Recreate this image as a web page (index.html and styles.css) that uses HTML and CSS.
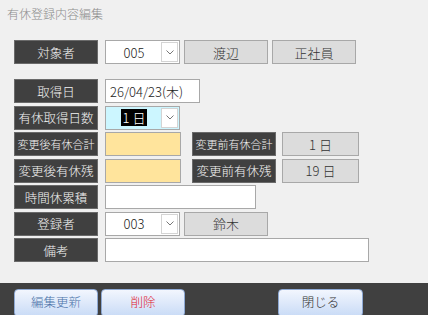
FILE: index.html
```html
<!DOCTYPE html>
<html lang="ja">
<head>
    <meta charset="UTF-8">
    <title>有休登録内容編集</title>
    <link rel="stylesheet" href="styles.css">
</head>
<body>
    <div class="title">有休登録内容編集</div>

    <div class="form">
        <div class="row first">
            <div class="label">対象者</div>
            <div class="select"><span class="select-text">005</span><span class="arrow"><svg width="8" height="5" viewBox="0 0 8 5"><path d="M0.5 0.5 L4 4 L7.5 0.5" fill="none" stroke="#777" stroke-width="1"/></svg></span></div>
            <div class="gray-box name">渡辺</div>
            <div class="gray-box name">正社員</div>
        </div>

        <div class="row">
            <div class="label">取得日</div>
            <div class="input date">26/04/23(木)</div>
        </div>

        <div class="row">
            <div class="label">有休取得日数</div>
            <div class="select cyan"><span class="select-text"><span class="selected">1&nbsp;日</span></span><span class="arrow"><svg width="8" height="5" viewBox="0 0 8 5"><path d="M0.5 0.5 L4 4 L7.5 0.5" fill="none" stroke="#777" stroke-width="1"/></svg></span></div>
        </div>

        <div class="row">
            <div class="label small">変更後有休合計</div>
            <div class="input yellow"></div>
            <div class="label small second">変更前有休合計</div>
            <div class="gray-box days">1 日</div>
        </div>

        <div class="row">
            <div class="label">変更後有休残</div>
            <div class="input yellow"></div>
            <div class="label second">変更前有休残</div>
            <div class="gray-box days">19 日</div>
        </div>

        <div class="row">
            <div class="label">時間休累積</div>
            <div class="input hours"></div>
        </div>

        <div class="row">
            <div class="label">登録者</div>
            <div class="select"><span class="select-text">003</span><span class="arrow"><svg width="8" height="5" viewBox="0 0 8 5"><path d="M0.5 0.5 L4 4 L7.5 0.5" fill="none" stroke="#777" stroke-width="1"/></svg></span></div>
            <div class="gray-box name">鈴木</div>
        </div>

        <div class="row">
            <div class="label">備考</div>
            <div class="input note"></div>
        </div>
    </div>

    <div class="footer">
        <button class="btn btn-update">編集更新</button>
        <button class="btn btn-delete">削除</button>
        <button class="btn btn-close">閉じる</button>
    </div>
</body>
</html>
```

FILE: styles.css
```css
* {
    box-sizing: border-box;
    margin: 0;
    padding: 0;
}

body {
    font-family: "Noto Sans CJK JP", "Noto Sans", sans-serif;
    font-weight: 300;
    background-color: #f0f0f0;
    color: #222;
    width: 428px;
    height: 315px;
    overflow: hidden;
}

.title {
    height: 40px;
    padding: 5px 0 0 7px;
    font-size: 12px;
    line-height: 18px;
    color: #8c8c8c;
}

.form {
    display: flex;
    flex-direction: column;
    gap: 2.5px;
    padding-left: 14px;
}

.row {
    display: flex;
    align-items: stretch;
    height: 24px;
}

.row.first {
    margin-bottom: 12.5px;
}

.label {
    width: 84px;
    background-color: #404040;
    border: 1px solid #6a6a6a;
    color: #f4f4f4;
    font-size: 12.5px;
    display: flex;
    align-items: center;
    justify-content: center;
    margin-right: 7px;
    white-space: nowrap;
}

.label.small {
    font-size: 11px;
}

.label.second {
    margin-left: 11px;
    margin-right: 6px;
}

.select {
    width: 75px;
    display: flex;
    background-color: #fff;
    border: 1px solid #a8a8a8;
    margin-right: 4px;
}

.select.cyan {
    background-color: #ccf6ff;
}

.select-text {
    flex: 1;
    display: flex;
    align-items: center;
    justify-content: center;
    font-size: 13px;
    padding-left: 2px;
}

.selected {
    background-color: #000;
    color: #fff;
    padding: 0 2px;
    line-height: 17px;
}

.arrow {
    width: 17px;
    margin: 1px;
    background-color: #fff;
    border: 1px solid #d4d4d4;
    display: flex;
    align-items: center;
    justify-content: center;
}

.gray-box {
    background-color: #dcdcdc;
    border: 1px solid #a8a8a8;
    display: flex;
    align-items: center;
    justify-content: center;
    font-size: 13px;
    color: #333;
}

.gray-box.name {
    width: 84px;
    margin-right: 4px;
}

.gray-box.days {
    width: 77px;
}

.input {
    background-color: #fff;
    border: 1px solid #a8a8a8;
    font-size: 13px;
    display: flex;
    align-items: center;
}

.input.date {
    width: 95px;
    padding-left: 4px;
}

.input.yellow {
    width: 76px;
    background-color: #ffe49c;
}

.input.hours {
    width: 151px;
}

.input.note {
    width: 264px;
}

.footer {
    margin-top: 21px;
    height: 40px;
    background-color: #404040;
    display: flex;
    padding: 6px 0 0 14px;
}

.btn {
    width: 84px;
    height: 28px;
    font-family: inherit;
    font-weight: 300;
    font-size: 12.5px;
    border: 1px solid #8ea9d4;
    border-radius: 4px;
    background: linear-gradient(#f2f6fe, #c9dbf6);
    color: #333;
    margin-right: 3px;
    padding-bottom: 4px;
}

.btn-update {
    color: #4a72a8;
}

.btn-delete {
    color: #e0202c;
}

.btn-close {
    margin-left: 90px;
    width: 85px;
}
```
